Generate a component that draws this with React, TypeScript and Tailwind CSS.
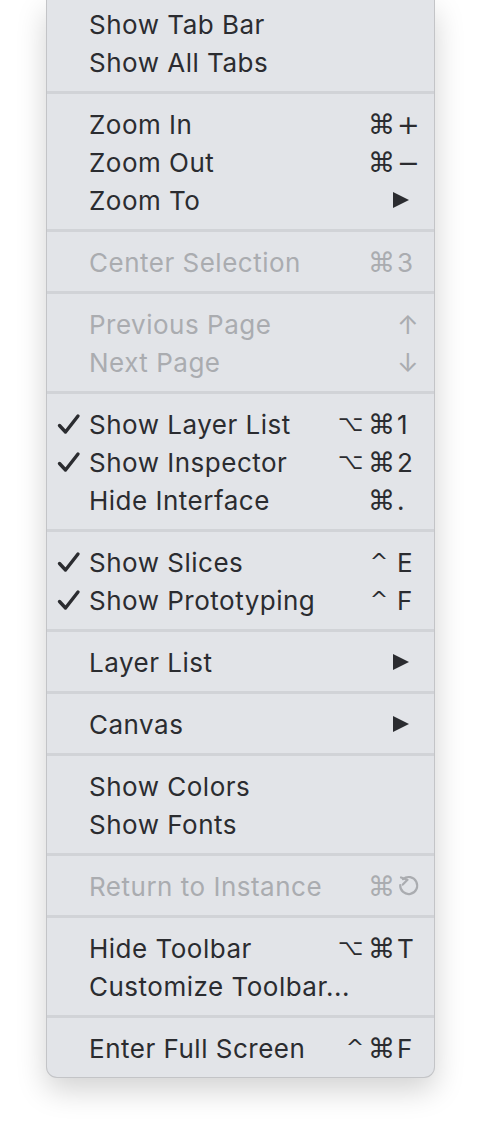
import React from 'react';

type Item = {
  label: string;
  checked?: boolean;
  disabled?: boolean;
  mods?: string[];
  keyChar?: string;
  submenu?: boolean;
};

const groups: Item[][] = [
  [{ label: 'Show Tab Bar' }, { label: 'Show All Tabs' }],
  [
    { label: 'Zoom In', mods: ['⌘'], keyChar: '+' },
    { label: 'Zoom Out', mods: ['⌘'], keyChar: '−' },
    { label: 'Zoom To', submenu: true },
  ],
  [{ label: 'Center Selection', disabled: true, mods: ['⌘'], keyChar: '3' }],
  [
    { label: 'Previous Page', disabled: true, keyChar: '↑' },
    { label: 'Next Page', disabled: true, keyChar: '↓' },
  ],
  [
    { label: 'Show Layer List', checked: true, mods: ['⌥', '⌘'], keyChar: '1' },
    { label: 'Show Inspector', checked: true, mods: ['⌥', '⌘'], keyChar: '2' },
    { label: 'Hide Interface', mods: ['⌘'], keyChar: '.' },
  ],
  [
    { label: 'Show Slices', checked: true, mods: ['^'], keyChar: 'E' },
    { label: 'Show Prototyping', checked: true, mods: ['^'], keyChar: 'F' },
  ],
  [{ label: 'Layer List', submenu: true }],
  [{ label: 'Canvas', submenu: true }],
  [{ label: 'Show Colors' }, { label: 'Show Fonts' }],
  [{ label: 'Return to Instance', disabled: true, mods: ['⌘'], keyChar: 'return' }],
  [
    { label: 'Hide Toolbar', mods: ['⌥', '⌘'], keyChar: 'T' },
    { label: 'Customize Toolbar...' },
  ],
  [{ label: 'Enter Full Screen', mods: ['^', '⌘'], keyChar: 'F' }],
];

const Check = () => (
  <svg width="24" height="22" viewBox="0 0 24 22" fill="none">
    <path d="M2.5 12.5 L8.5 19 L21 3" stroke="currentColor" strokeWidth="3.4" strokeLinecap="round" strokeLinejoin="round" />
  </svg>
);

const ReturnIcon = () => (
  <svg width="23" height="23" viewBox="0 0 23 23" fill="none">
    <path d="M6 4.2 A8.5 8.5 0 1 1 3.2 10" stroke="currentColor" strokeWidth="2.2" strokeLinecap="round" />
    <path d="M4 2.5 L10.5 4.8 L5.8 9.6" stroke="currentColor" strokeWidth="2.2" strokeLinecap="round" strokeLinejoin="round" />
  </svg>
);

const Arrow = () => (
  <svg width="18" height="18" viewBox="0 0 18 18">
    <path d="M1 1 L17 9 L1 17 Z" fill="currentColor" />
  </svg>
);

function modClass(m: string) {
  if (m === '⌥') return 'w-[30px] text-left text-[22px]';
  if (m === '^') return 'w-[26px] text-center text-[22px]';
  return 'w-[24px] text-center text-[27px]';
}

function Row({ item }: { item: Item }) {
  const color = item.disabled ? 'text-[#aaacb0]' : 'text-[#2b2c30]';
  const symbolKey = item.keyChar === '+' || item.keyChar === '−';
  return (
    <div className={`flex h-[38px] items-center ${color}`}>
      <div className="flex w-[42px] justify-end pr-[8px]">{item.checked && <Check />}</div>
      <div className="flex-1 whitespace-nowrap tracking-[0.5px]">{item.label}</div>
      {item.submenu ? (
        <div className="pr-[24px]">
          <Arrow />
        </div>
      ) : (
        <div className="flex items-center pr-[20px]">
          {item.mods?.map((m, i) => (
            <span key={i} className={`font-['DejaVu_Sans',sans-serif] leading-none ${modClass(m)}`}>
              {m}
            </span>
          ))}
          {item.keyChar && (
            <span
              className={`ml-[5px] w-[17px] text-left ${symbolKey ? "font-['DejaVu_Sans',sans-serif] text-[27px] leading-none" : ''}`}
            >
              {item.keyChar === 'return' ? (
                <span className="relative top-[2px] inline-block">
                  <ReturnIcon />
                </span>
              ) : (
                item.keyChar
              )}
            </span>
          )}
        </div>
      )}
    </div>
  );
}

export default function App() {
  return (
    <div className="min-h-[1131px] w-[480px] bg-white font-['Inter',sans-serif] text-[26px]">
      <div className="ml-[46px] w-[389px] rounded-b-[11px] border border-t-0 border-[#c3c4c7] bg-[#e2e4e8] pb-[10px] pt-[5px] shadow-[0_12px_30px_rgba(0,0,0,0.18)]">
        {groups.map((g, gi) => (
          <div key={gi}>
            {gi > 0 && (
              <div className="pb-[11px] pt-[10px]">
                <div className="h-[3px] bg-[#d1d3d7]" />
              </div>
            )}
            {g.map((it) => (
              <Row key={it.label} item={it} />
            ))}
          </div>
        ))}
      </div>
    </div>
  );
}
